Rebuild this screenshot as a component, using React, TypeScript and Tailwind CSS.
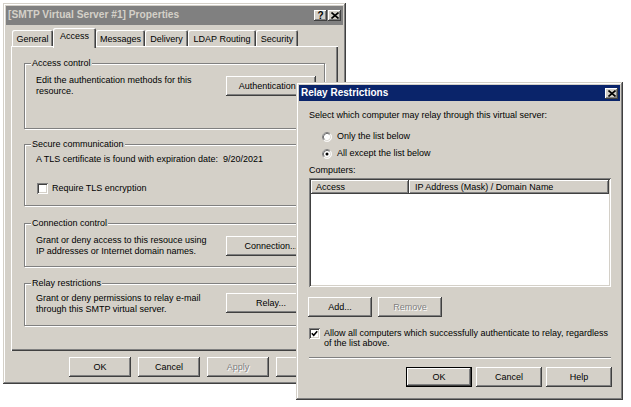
import React from "react";

const raisedWin =
  "shadow-[inset_-1px_-1px_#404040,inset_1px_1px_#d4d0c8,inset_-2px_-2px_#808080,inset_2px_2px_#ffffff]";
const raisedBtn =
  "shadow-[inset_-1px_-1px_#404040,inset_1px_1px_#ffffff,inset_-2px_-2px_#808080,inset_2px_2px_#d4d0c8]";
const sunken =
  "shadow-[inset_1px_1px_#808080,inset_-1px_-1px_#ffffff,inset_2px_2px_#404040,inset_-2px_-2px_#d4d0c8]";

function Btn({
  children,
  className = "",
  disabled = false,
  isDefault = false,
}: {
  children: React.ReactNode;
  className?: string;
  disabled?: boolean;
  isDefault?: boolean;
}) {
  return (
    <div
      className={`flex h-[20px] shrink-0 items-center justify-center whitespace-nowrap bg-[#d4d0c8] ${
        isDefault
          ? "border border-black shadow-[inset_-1px_-1px_#404040,inset_1px_1px_#ffffff,inset_-2px_-2px_#808080]"
          : raisedBtn
      } ${disabled ? "text-[#808080] [text-shadow:1px_1px_0_#ffffff]" : ""} ${className}`}
    >
      {children}
    </div>
  );
}

function CloseGlyph() {
  return (
    <svg width="8" height="7" viewBox="0 0 8 7">
      <path d="M0.5 0.5 L7.5 6.5 M7.5 0.5 L0.5 6.5" stroke="#000" strokeWidth="1.6" fill="none" />
    </svg>
  );
}

function CaptionBtn({ children }: { children: React.ReactNode }) {
  return (
    <div
      className={`flex h-[11px] w-[13px] items-center justify-center bg-[#d4d0c8] ${raisedBtn} text-[10px] font-bold leading-none text-black`}
    >
      {children}
    </div>
  );
}

function Radio({ checked }: { checked?: boolean }) {
  return (
    <svg width="10" height="10" viewBox="0 0 12 12" className="shrink-0">
      <circle cx="6" cy="6" r="5.5" fill="#ffffff" />
      <path d="M2.11 9.89 A5.5 5.5 0 0 1 9.89 2.11" stroke="#808080" fill="none" />
      <path d="M9.89 2.11 A5.5 5.5 0 0 1 2.11 9.89" stroke="#ffffff" fill="none" />
      <path d="M2.82 9.18 A4.5 4.5 0 0 1 9.18 2.82" stroke="#404040" fill="none" />
      <path d="M9.18 2.82 A4.5 4.5 0 0 1 2.82 9.18" stroke="#d4d0c8" fill="none" />
      {checked && <circle cx="6" cy="6" r="1.8" fill="#000000" />}
    </svg>
  );
}

function Check({ checked }: { checked?: boolean }) {
  return (
    <div className={`flex h-[11px] w-[11px] shrink-0 items-center justify-center bg-white ${sunken}`}>
      {checked && (
        <svg width="7" height="7" viewBox="0 0 7 7">
          <path d="M0.8 3.2 L2.7 5.2 L6.2 1.2" stroke="#000" strokeWidth="1.6" fill="none" />
        </svg>
      )}
    </div>
  );
}

function Group({
  label,
  className = "",
  children,
}: {
  label: string;
  className?: string;
  children: React.ReactNode;
}) {
  return (
    <div
      className={`relative border border-[#808080] shadow-[inset_1px_1px_#ffffff,1px_1px_#ffffff] ${className}`}
    >
      <span className="absolute left-[6px] top-[-6px] bg-[#d4d0c8] px-[1px] leading-[11px]">{label}</span>
      {children}
    </div>
  );
}

const tabs = [
  { name: "General", w: "w-[41px]" },
  { name: "Access", w: "w-[43px]", active: true },
  { name: "Messages", w: "w-[49px]" },
  { name: "Delivery", w: "w-[43px]" },
  { name: "LDAP Routing", w: "w-[68px]" },
  { name: "Security", w: "w-[42px]" },
];

function PropertiesWindow() {
  return (
    <div className={`absolute left-[3px] top-[3px] flex h-[381px] w-[343px] flex-col bg-[#d4d0c8] p-[3px] ${raisedWin}`}>
      <div className="flex h-[19px] shrink-0 items-center gap-[1px] bg-[#808080] pl-[2px] pr-[2px]">
        <span className="flex-1 text-[10.2px] font-bold leading-none text-[#d4d0c8]">
          [SMTP Virtual Server #1] Properties
        </span>
        <CaptionBtn>?</CaptionBtn>
        <CaptionBtn>
          <CloseGlyph />
        </CaptionBtn>
      </div>

      <div className="flex flex-col px-[5px] pt-[3px]">
        <div className="flex h-[18px] items-end pl-[1px]">
          {tabs.map((t) =>
            t.active ? (
              <div
                key={t.name}
                className={`relative z-10 mb-[-2px] flex h-[20px] ${t.w} items-start justify-center rounded-t-[2px] bg-[#d4d0c8] pt-[3px] shadow-[inset_1px_1px_#ffffff,inset_-1px_0_#404040,inset_-2px_0_#808080]`}
              >
                {t.name}
              </div>
            ) : (
              <div
                key={t.name}
                className={`flex h-[16px] ${t.w} items-start justify-center rounded-t-[2px] pt-[4px] shadow-[inset_1px_1px_#ffffff,inset_-1px_0_#404040,inset_-2px_0_#808080]`}
              >
                {t.name}
              </div>
            )
          )}
        </div>

        <div
          className={`flex h-[305px] flex-col px-[13px] pt-[17px] shadow-[inset_1px_1px_#ffffff,inset_-1px_-1px_#404040,inset_-2px_-2px_#808080]`}
        >
          <Group label="Access control" className="h-[66px]">
            <div className="flex items-start pl-[11px] pr-[8px] pt-[11px]">
              <div className="flex-1">
                Edit the authentication methods for this
                <br />
                resource.
              </div>
              <Btn className="mt-[1px] w-[90px]">Authentication...</Btn>
            </div>
          </Group>

          <Group label="Secure communication" className="mt-[15px] h-[62px]">
            <div className="pl-[11px] pt-[9px]">
              A TLS certificate is found with expiration date:&nbsp;&nbsp;9/20/2021
            </div>
            <div className="mt-[18px] flex items-center gap-[4px] pl-[12px]">
              <Check />
              <span>Require TLS encryption</span>
            </div>
          </Group>

          <Group label="Connection control" className="mt-[17px] h-[44px]">
            <div className="flex items-start pl-[11px] pr-[8px] pt-[11px]">
              <div className="flex-1">
                Grant or deny access to this resouce using
                <br />
                IP addresses or Internet domain names.
              </div>
              <Btn className="mt-[1px] w-[90px]">Connection...</Btn>
            </div>
          </Group>

          <Group label="Relay restrictions" className="mt-[16px] h-[43px]">
            <div className="flex items-start pl-[11px] pr-[8px] pt-[9px]">
              <div className="flex-1">
                Grant or deny permissions to relay e-mail
                <br />
                through this SMTP virtual server.
              </div>
              <Btn className="mt-[0px] w-[90px]">Relay...</Btn>
            </div>
          </Group>
        </div>
      </div>

      <div className="mt-[6px] flex justify-end gap-[7px] pr-[5px]">
        <Btn className="w-[62px]">OK</Btn>
        <Btn className="w-[62px]">Cancel</Btn>
        <Btn className="w-[62px]" disabled>
          Apply
        </Btn>
        <Btn className="w-[62px]">Help</Btn>
      </div>
    </div>
  );
}

function RelayDialog() {
  return (
    <div
      className={`absolute left-[296px] top-[82px] z-20 flex h-[318px] w-[327px] flex-col bg-[#d4d0c8] p-[3px] ${raisedWin}`}
    >
      <div className="flex h-[16px] shrink-0 items-center bg-[#0a246a] pl-[2px] pr-[2px]">
        <span className="flex-1 text-[10px] font-bold leading-none text-white">Relay Restrictions</span>
        <CaptionBtn>
          <CloseGlyph />
        </CaptionBtn>
      </div>

      <div className="flex flex-col pl-[10px] pr-[9px]">
        <div className="mt-[9px]">Select which computer may relay through this virtual server:</div>

        <div className="mt-[10px] flex h-[11px] items-center gap-[5px] pl-[13px]">
          <Radio />
          <span>Only the list below</span>
        </div>
        <div className="mt-[6px] flex h-[11px] items-center gap-[5px] pl-[13px]">
          <Radio checked />
          <span>All except the list below</span>
        </div>

        <div className="mt-[6px]">Computers:</div>

        <div className={`mt-[2px] flex h-[109px] flex-col bg-white p-[2px] ${sunken}`}>
          <div className="flex h-[14px] shrink-0">
            <div className={`flex w-[98px] items-center bg-[#d4d0c8] pl-[5px] ${raisedBtn}`}>Access</div>
            <div className={`flex flex-1 items-center bg-[#d4d0c8] pl-[6px] ${raisedBtn}`}>
              IP Address (Mask) / Domain Name
            </div>
          </div>
        </div>

        <div className="ml-[-1px] mt-[10px] flex gap-[6px]">
          <Btn className="w-[64px]">Add...</Btn>
          <Btn className="w-[64px]" disabled>
            Remove
          </Btn>
        </div>

        <div className="mt-[11px] flex items-start gap-[4px]">
          <Check checked />
          <div className="leading-[10px]">
            Allow all computers which successfully authenticate to relay, regardless
            <br />
            of the list above.
          </div>
        </div>

        <div className="mt-[9px] h-[2px] border-t border-b border-t-[#808080] border-b-white" />

        <div className="-mr-[1px] mt-[8px] flex justify-end gap-[4px]">
          <Btn className="w-[66px]" isDefault>
            OK
          </Btn>
          <Btn className="w-[66px]">Cancel</Btn>
          <Btn className="w-[66px]">Help</Btn>
        </div>
      </div>
    </div>
  );
}

export default function App() {
  return (
    <div className="relative h-[407px] w-[631px] overflow-hidden bg-white font-['Liberation_Sans',Arial,sans-serif] text-[9px] leading-[11px] text-black">
      <PropertiesWindow />
      <RelayDialog />
    </div>
  );
}
